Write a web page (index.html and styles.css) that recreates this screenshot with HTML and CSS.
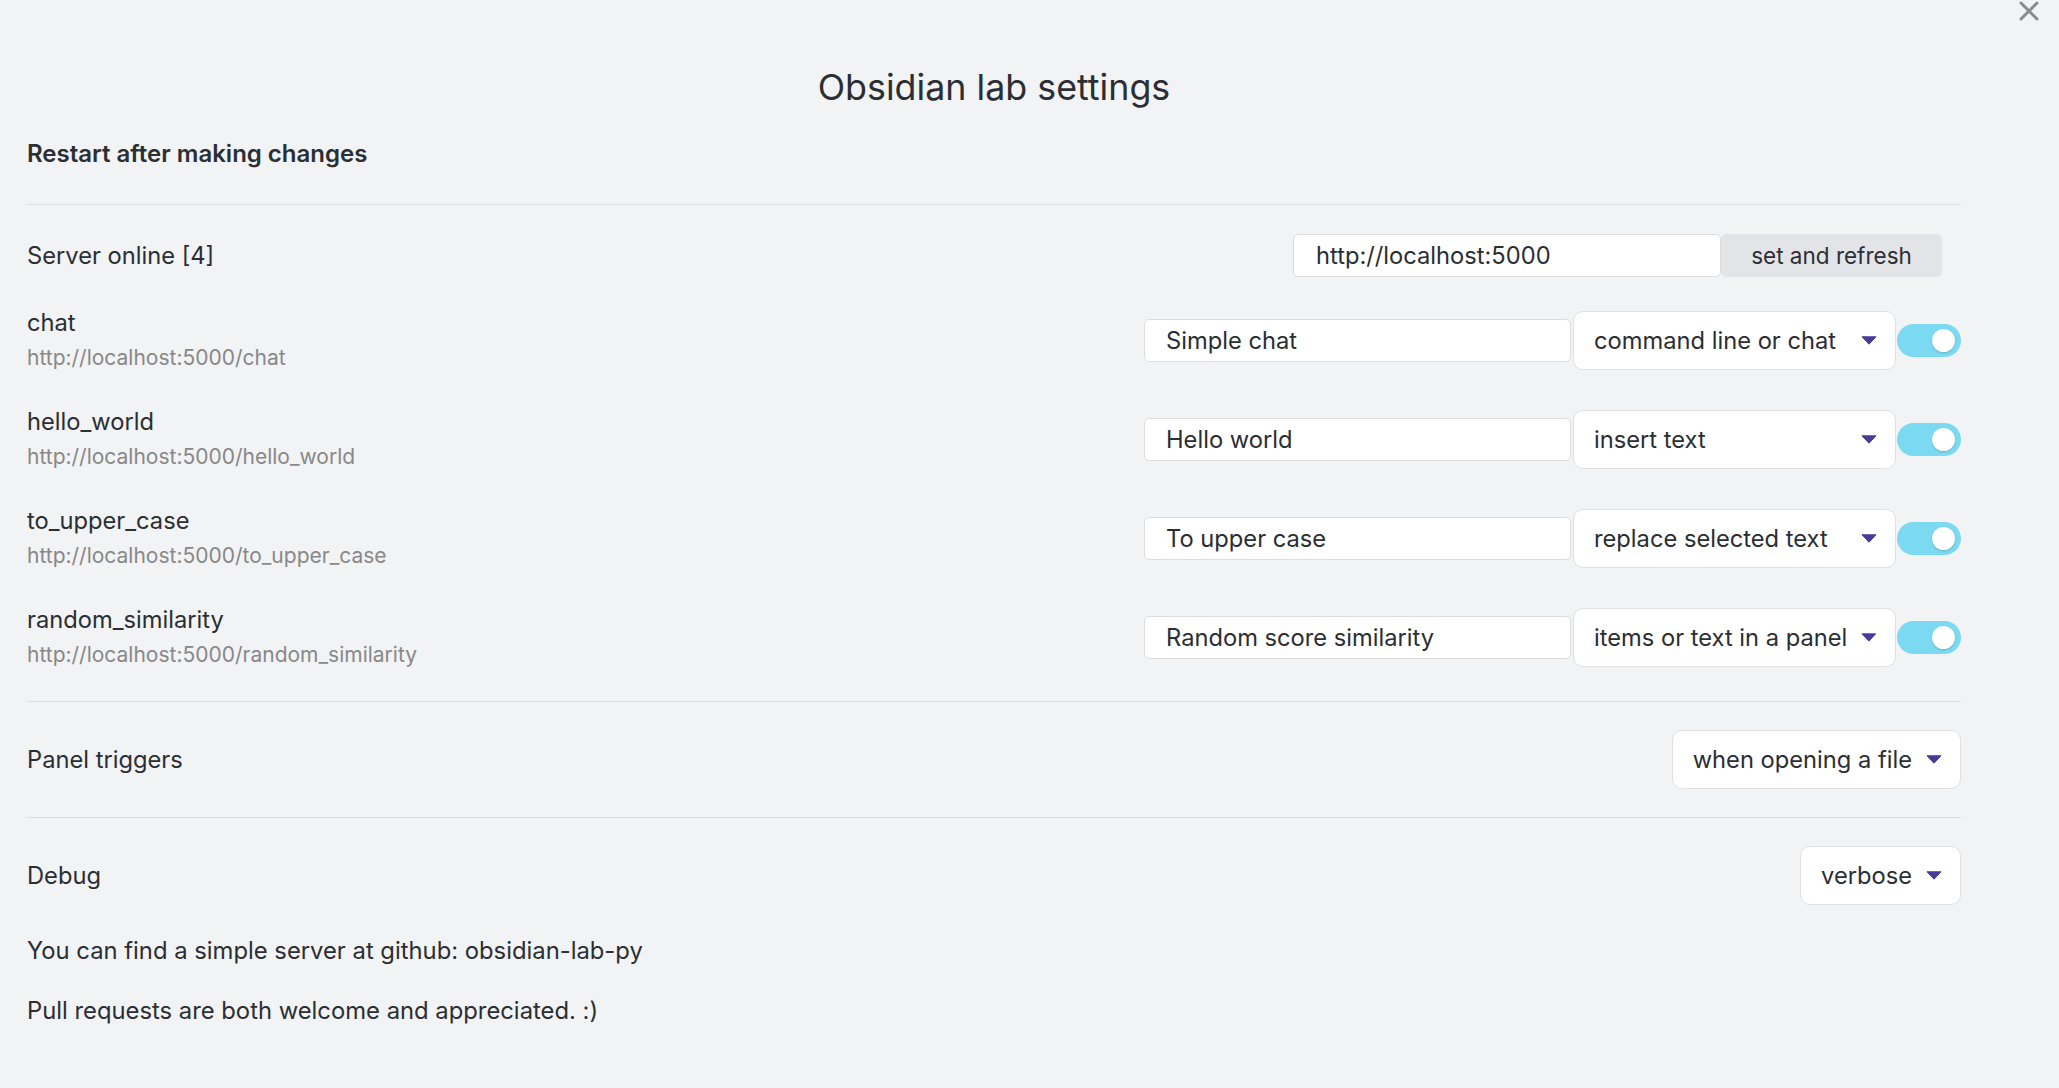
FILE: index.html
```html
<!DOCTYPE html>
<html lang="en">
<head>
<meta charset="utf-8">
<title>Obsidian lab settings</title>
<link rel="stylesheet" href="styles.css">
</head>
<body>
<div class="modal">
  <div class="modal-close" aria-label="Close">
    <svg viewBox="0 0 20 20" width="20" height="20"><path d="M2 2 L18 18 M18 2 L2 18" stroke="#8a8a8a" stroke-width="3" stroke-linecap="round" fill="none"/></svg>
  </div>
  <h2 class="modal-title">Obsidian lab settings</h2>
  <h3 class="section-heading">Restart after making changes</h3>

  <div class="setting server-row">
    <div class="setting-info">
      <div class="setting-name">Server online [4]</div>
    </div>
    <div class="setting-control">
      <input class="text-input url-input" type="text" value="http://localhost:5000">
      <button class="btn">set and refresh</button>
    </div>
  </div>

  <div class="plugin-list">
    <div class="plugin-row">
      <div class="plugin-info">
        <div class="setting-name">chat</div>
        <div class="setting-desc">http://localhost:5000/chat</div>
      </div>
      <div class="setting-control">
        <input class="text-input name-input" type="text" value="Simple chat">
        <div class="dropdown wide"><span>command line or chat</span><svg class="arrow" viewBox="0 0 16 9" width="16" height="9"><path d="M1 0.8 H15 L8 8.2 Z" fill="#483c99" stroke="#483c99" stroke-width="1" stroke-linejoin="round"/></svg></div>
        <div class="toggle"><span class="knob"></span></div>
      </div>
    </div>
    <div class="plugin-row">
      <div class="plugin-info">
        <div class="setting-name">hello_world</div>
        <div class="setting-desc">http://localhost:5000/hello_world</div>
      </div>
      <div class="setting-control">
        <input class="text-input name-input" type="text" value="Hello world">
        <div class="dropdown wide"><span>insert text</span><svg class="arrow" viewBox="0 0 16 9" width="16" height="9"><path d="M1 0.8 H15 L8 8.2 Z" fill="#483c99" stroke="#483c99" stroke-width="1" stroke-linejoin="round"/></svg></div>
        <div class="toggle"><span class="knob"></span></div>
      </div>
    </div>
    <div class="plugin-row">
      <div class="plugin-info">
        <div class="setting-name">to_upper_case</div>
        <div class="setting-desc">http://localhost:5000/to_upper_case</div>
      </div>
      <div class="setting-control">
        <input class="text-input name-input" type="text" value="To upper case">
        <div class="dropdown wide"><span>replace selected text</span><svg class="arrow" viewBox="0 0 16 9" width="16" height="9"><path d="M1 0.8 H15 L8 8.2 Z" fill="#483c99" stroke="#483c99" stroke-width="1" stroke-linejoin="round"/></svg></div>
        <div class="toggle"><span class="knob"></span></div>
      </div>
    </div>
    <div class="plugin-row">
      <div class="plugin-info">
        <div class="setting-name">random_similarity</div>
        <div class="setting-desc">http://localhost:5000/random_similarity</div>
      </div>
      <div class="setting-control">
        <input class="text-input name-input" type="text" value="Random score similarity">
        <div class="dropdown wide"><span>items or text in a panel</span><svg class="arrow" viewBox="0 0 16 9" width="16" height="9"><path d="M1 0.8 H15 L8 8.2 Z" fill="#483c99" stroke="#483c99" stroke-width="1" stroke-linejoin="round"/></svg></div>
        <div class="toggle"><span class="knob"></span></div>
      </div>
    </div>
  </div>

  <div class="setting bordered">
    <div class="setting-info">
      <div class="setting-name">Panel triggers</div>
    </div>
    <div class="setting-control">
      <div class="dropdown"><span>when opening a file</span><svg class="arrow" viewBox="0 0 16 9" width="16" height="9"><path d="M1 0.8 H15 L8 8.2 Z" fill="#483c99" stroke="#483c99" stroke-width="1" stroke-linejoin="round"/></svg></div>
    </div>
  </div>

  <div class="setting bordered">
    <div class="setting-info">
      <div class="setting-name">Debug</div>
    </div>
    <div class="setting-control">
      <div class="dropdown"><span>verbose</span><svg class="arrow" viewBox="0 0 16 9" width="16" height="9"><path d="M1 0.8 H15 L8 8.2 Z" fill="#483c99" stroke="#483c99" stroke-width="1" stroke-linejoin="round"/></svg></div>
    </div>
  </div>

  <div class="notes">
    <p class="note">You can find a simple server at github: obsidian-lab-py</p>
    <p class="note">Pull requests are both welcome and appreciated. :)</p>
  </div>
</div>
</body>
</html>
```
FILE: styles.css
```css
html, body {
  margin: 0;
  padding: 0;
  background: #f2f3f5;
}
body {
  font-family: Inter, "Noto Sans", sans-serif;
  color: #2b2e33;
  font-size: 23.7px;
}
.modal {
  position: relative;
  box-sizing: border-box;
  height: 1088px;
  padding: 65px 98px 0 27px;
  overflow: hidden;
}
.modal-close {
  position: absolute;
  top: 1px;
  right: 20px;
  width: 20px;
  height: 20px;
}
.modal-close svg { display: block; }
.modal-title {
  margin: 0;
  font-size: 35.8px;
  font-weight: 400;
  line-height: 44px;
  text-align: center;
}
.section-heading {
  margin: 30px 0 0;
  font-size: 24px;
  font-weight: 600;
  line-height: 30px;
}
.setting {
  display: flex;
  align-items: center;
}
.server-row {
  margin-top: 35px;
  border-top: 1px solid #dcdde0;
  padding: 29px 0 14px;
}
.setting-info { flex: 1; }
.setting-name {
  font-size: 23.7px;
  line-height: 30px;
}
.setting-desc {
  margin-top: 6px;
  font-size: 21px;
  line-height: 28px;
  color: #888888;
}
.setting-control {
  display: flex;
  align-items: center;
}
.text-input {
  box-sizing: border-box;
  height: 43px;
  margin: 0;
  padding: 0 21px;
  border: 1px solid #dcdcdc;
  border-radius: 5px;
  background: #ffffff;
  font-family: Inter, "Noto Sans", sans-serif;
  font-size: 23.7px;
  color: #2b2e33;
  outline: none;
}
.url-input {
  width: 428px;
  padding-left: 22px;
}
.btn {
  box-sizing: border-box;
  width: 221px;
  height: 43px;
  margin: 0 19px 0 0;
  padding: 0;
  border: none;
  border-radius: 5px;
  background: #e3e4e8;
  font-family: Inter, "Noto Sans", sans-serif;
  font-size: 22.5px;
  color: #2b2e33;
}
.plugin-list {
  padding-bottom: 14px;
}
.plugin-row {
  display: flex;
  align-items: center;
  padding: 15.5px 0;
}
.plugin-info {
  flex: 1;
  padding-top: 1px;
  padding-bottom: 3px;
}
.name-input {
  width: 427px;
  margin-right: 2px;
}
.dropdown {
  box-sizing: border-box;
  height: 59px;
  display: flex;
  align-items: center;
  padding: 0 18px 0 20px;
  border: 1px solid #e0e0e0;
  border-radius: 10px;
  background: #ffffff;
  font-size: 23.7px;
  white-space: nowrap;
}
.dropdown span { flex: 1; }
.dropdown .arrow {
  display: block;
  margin-left: 14px;
  width: 16px;
  height: 9px;
}
.dropdown.wide {
  width: 323px;
}
.toggle {
  position: relative;
  box-sizing: border-box;
  width: 64px;
  height: 33px;
  margin-left: 1px;
  border-radius: 17px;
  background: #7bd9f1;
}
.knob {
  position: absolute;
  top: 5px;
  right: 6px;
  width: 23px;
  height: 23px;
  border-radius: 50%;
  background: #ffffff;
  box-shadow: 0 1px 2px rgba(0, 0, 0, 0.18);
}
.bordered {
  border-top: 1px solid #dcdde0;
  padding: 28px 0;
}
.notes {
  padding-top: 2px;
}
.note {
  margin: 0 0 28px;
  font-size: 23.8px;
  line-height: 32px;
}
```
